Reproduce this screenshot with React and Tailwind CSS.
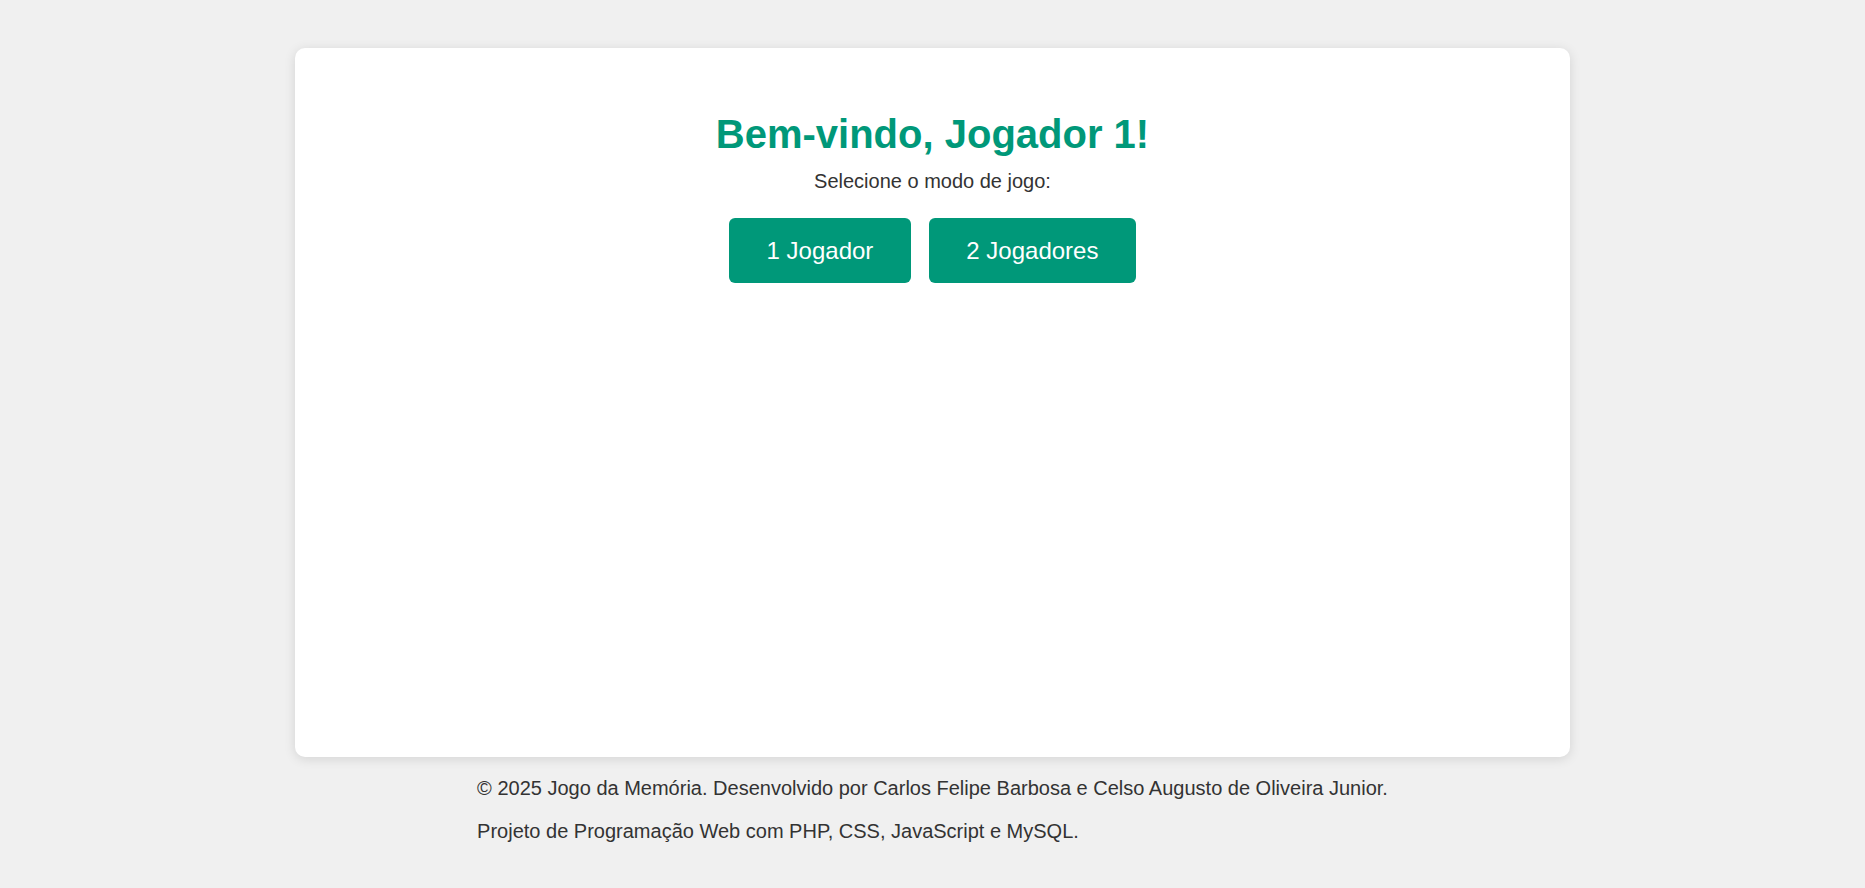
import { useState } from "react";

export default function App() {
  const [mode, setMode] = useState(null);

  return (
    <div className="min-h-screen bg-[#f0f0f0] text-[#333] font-['Liberation_Sans',Arial,sans-serif] pt-[48px] pb-[20px]">
      {/* Main card */}
      <main className="mx-auto w-[1275px] h-[709px] bg-white rounded-[10px] shadow-[0_2px_12px_rgba(0,0,0,0.12)] pt-[63px] flex flex-col items-center">
        <h1 className="text-[40px] leading-[46px] font-bold text-[#009879]">
          Bem-vindo, Jogador 1!
        </h1>
        <p className="mt-[13px] text-[20px] leading-[23px]">Selecione o modo de jogo:</p>

        <div className="mt-[25px] flex gap-[18px]">
          <button
            onClick={() => setMode(1)}
            className="h-[65px] px-[37.5px] bg-[#009879] text-white text-[24px] rounded-[6px] hover:bg-[#007f65]">
            1 Jogador
          </button>
          <button
            onClick={() => setMode(2)}
            className="h-[65px] px-[37.5px] bg-[#009879] text-white text-[24px] rounded-[6px] hover:bg-[#007f65]">
            2 Jogadores
          </button>
        </div>
        {mode && <div className="hidden">{mode}</div>}
      </main>

      {/* Footer */}
      <footer className="mx-auto w-fit text-[20px] leading-[23px]">
        <p className="mt-[20px]">
          © 2025 Jogo da Memória. Desenvolvido por Carlos Felipe Barbosa e Celso Augusto de Oliveira Junior.
        </p>
        <p className="mt-[20px]">Projeto de Programação Web com PHP, CSS, JavaScript e MySQL.</p>
      </footer>
    </div>
  );
}
